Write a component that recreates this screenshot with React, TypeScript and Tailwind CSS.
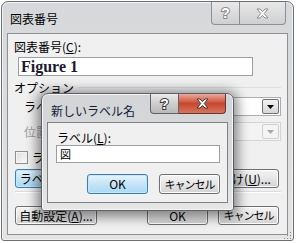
import React from "react";

const jp = "font-['Noto_Sans_CJK_JP',sans-serif]";

function CloseGlyph({ stroke = "#3a3a3a" }: { stroke?: string }) {
  return (
    <svg width="13" height="11" viewBox="-1 -1 13 11">
      <path
        d="M0 0H3L5.5 2.6L8 0H11L7.2 4.5L11 9H8L5.5 6.4L3 9H0L3.8 4.5Z"
        fill="#ffffff"
        stroke={stroke}
        strokeWidth="1"
        strokeLinejoin="round"
      />
    </svg>
  );
}

function HelpGlyph({ stroke = "#3a3a3a" }: { stroke?: string }) {
  return (
    <span
      className="font-['Liberation_Sans',sans-serif] text-[14px] font-bold leading-none text-white [paint-order:stroke_fill]"
      style={{ WebkitTextStroke: `2px ${stroke}` }}
    >
      ?
    </span>
  );
}

function Button({
  children,
  width,
  height = "h-[19px]",
  primary = false,
}: {
  children: React.ReactNode;
  width: string;
  height?: string;
  primary?: boolean;
}) {
  return (
    <div
      className={`${width} ${height} flex items-center justify-center whitespace-nowrap rounded-[3px] border text-[12px] leading-none text-black ${
        primary
          ? "border-[#3c7fb1] bg-linear-to-b from-[#e5f4fc] via-[#c4e5f6] to-[#a8d8f3] shadow-[inset_0_0_0_1px_#c0e8fc]"
          : "border-[#707070] bg-linear-to-b from-[#f4f4f4] via-[#e6e6e6] to-[#d2d2d2] shadow-[inset_0_0_0_1px_#fcfcfc]"
      }`}
    >
      {children}
    </div>
  );
}

function Cancel() {
  return <span className="text-[11px] tracking-[-1px]">キャンセル</span>;
}

function Combo({ disabled = false }: { disabled?: boolean }) {
  return (
    <div
      className={`w-[200px] h-[19px] flex justify-end items-stretch p-[1px] border ${
        disabled ? "border-[#d5d5d5] bg-[#f4f4f4]" : "border-[#abadb3] bg-white"
      }`}
    >
      <div
        className={`w-[17px] flex items-center justify-center rounded-[2px] border ${
          disabled
            ? "border-[#d0d0d0] bg-[#f4f4f4]"
            : "border-[#707070] bg-linear-to-b from-[#f2f2f2] to-[#d6d6d6]"
        }`}
      >
        <svg width="7" height="4" viewBox="0 0 7 4">
          <path d="M0 0H7L3.5 4Z" fill={disabled ? "#a8a8a8" : "#000000"} />
        </svg>
      </div>
    </div>
  );
}

export default function App() {
  return (
    <div className={`relative w-[297px] h-[243px] overflow-hidden bg-white ${jp}`}>
      {/* Outer dialog */}
      <div className="absolute left-[1px] top-[1px] w-[293px] h-[240px] flex flex-col rounded-t-[7px] rounded-b-[3px] border border-[#6b7077] bg-linear-to-b from-[#d6d8db] via-[#dcdcdc] to-[#e4e4e4] shadow-[inset_0_0_0_1px_#f2f2f2]">
        <div className="h-[31px] flex items-start">
          <span className="pl-[8px] pt-[11px] text-[12px] leading-none text-black">図表番号</span>
          <div className="ml-auto mr-[7px] flex">
            <div className="w-[29px] h-[23px] flex items-center justify-center rounded-bl-[4px] border border-t-0 border-[#8b9097] bg-linear-to-b from-[#e8e8e8] to-[#d0d0d0]">
              <HelpGlyph stroke="#8a8a8a" />
            </div>
            <div className="w-[46px] h-[23px] flex items-center justify-center rounded-br-[4px] border border-t-0 border-l-0 border-[#8b9097] bg-linear-to-b from-[#e8e8e8] to-[#d0d0d0]">
              <CloseGlyph stroke="#8a8a8a" />
            </div>
          </div>
        </div>

        <div className="flex-1 mx-[5px] mb-[5px] border border-[#8c9095] bg-[#f0f0f0] flex flex-col pt-[6px] pl-[6px] pr-[6px] text-[12px] text-black">
          <div className="h-[13px] leading-[13px]">
            図表番号(<span className="underline">C</span>):
          </div>
          <div className="mt-[4px] ml-[4px] w-[235px] h-[19px] flex items-center pl-[2px] border border-[#9a9ea5] bg-white">
            <span className="font-['Liberation_Serif',serif] text-[16px] font-bold leading-none text-[#1b1b30]">Figure 1</span>
          </div>
          <div className="mt-[5px] h-[13px] flex items-center gap-[4px]">
            <span className="leading-[13px]">オプション</span>
            <div className="flex-1 border-t border-[#d5dfe5]" />
          </div>
          <div className="mt-[3px] h-[19px] flex items-center">
            <span className="pl-[10px] leading-none whitespace-nowrap">ラベル(L):</span>
            <div className="ml-auto">
              <Combo />
            </div>
          </div>
          <div className="mt-[6px] h-[19px] flex items-center">
            <span className="pl-[10px] leading-none text-[#a0a0a0] whitespace-nowrap">位置(P):</span>
            <div className="ml-auto">
              <Combo disabled />
            </div>
          </div>
          <div className="mt-[10px] h-[13px] flex items-center gap-[4px] pl-[1px]">
            <div className="w-[13px] h-[13px] border border-[#8e8f8f] bg-linear-to-br from-[#dcdcdc] to-[#fbfbfb] shadow-[inset_0_0_0_1px_#f4f4f4]" />
            <span className="leading-none whitespace-nowrap">ラベルを番号から除外する(N)</span>
          </div>
          <div className="mt-[5px] flex items-center justify-between pl-[1px] pr-[2px]">
            <Button width="w-[82px]" primary>
              ラベル名(<span className="underline">L</span>)...
            </Button>
            <Button width="w-[91px]">
              番号付け(<span className="underline">U</span>)...
            </Button>
          </div>
          <div className="mt-[3px] ml-[1px] border-t border-[#d5dfe5] shadow-[0_1px_0_#ffffff]" />
          <div className="mt-[14px] flex items-center pl-[1px] pr-[2px]">
            <Button width="w-[82px]">
              自動設定(<span className="underline">A</span>)...
            </Button>
            <div className="ml-auto flex gap-[10px]">
              <Button width="w-[61px]">OK</Button>
              <Button width="w-[61px]">
                <Cancel />
              </Button>
            </div>
          </div>
        </div>
      </div>

      {/* resize grip */}
      <svg className="absolute left-[283px] top-[231px]" width="9" height="9" viewBox="0 0 9 9">
        <rect x="7" y="1" width="1" height="1" fill="#8a8a8a" />
        <rect x="4" y="4" width="1" height="1" fill="#8a8a8a" />
        <rect x="7" y="4" width="1" height="1" fill="#8a8a8a" />
        <rect x="1" y="7" width="1" height="1" fill="#8a8a8a" />
        <rect x="4" y="7" width="1" height="1" fill="#8a8a8a" />
        <rect x="7" y="7" width="1" height="1" fill="#8a8a8a" />
      </svg>

      {/* Inner dialog */}
      <div className="absolute left-[41px] top-[93px] w-[193px] h-[118px] flex flex-col rounded-t-[7px] rounded-b-[3px] border border-[#5c6168] bg-linear-to-b from-[#d2d4d7] via-[#dadada] to-[#e6e6e6] shadow-[0_2px_12px_4px_rgba(0,0,0,0.45),inset_0_0_0_1px_#f4f4f4]">
        <div className="h-[28px] flex items-start">
          <span className="pl-[9px] pt-[11px] text-[12px] leading-none text-[#10203a]">新しいラベル名</span>
          <div className="ml-auto mr-[7px] flex">
            <div className="w-[29px] h-[20px] flex items-center justify-center rounded-bl-[4px] border border-t-0 border-[#5f646b] bg-linear-to-b from-[#eaeaea] via-[#cfcfcf] to-[#b9b9b9]">
              <HelpGlyph />
            </div>
            <div className="w-[47px] h-[20px] flex items-center justify-center rounded-br-[4px] border border-t-0 border-l-0 border-[#5f3a35] bg-linear-to-b from-[#e9a99b] via-[#c8472f] to-[#d9745c]">
              <CloseGlyph />
            </div>
          </div>
        </div>
        <div className="flex-1 mx-[5px] mb-[7px] border border-[#7d8288] bg-[#f0f0f0] flex flex-col pt-[8px] pl-[8px] text-[12px] text-black">
          <div className="h-[13px] leading-[13px] pl-[1px]">
            ラベル(<span className="underline">L</span>):
          </div>
          <div className="mt-[1px] w-[164px] h-[18px] flex items-center pl-[3px] border border-[#9a9ea5] bg-white">
            <span className="text-[11px] leading-none">図</span>
          </div>
          <div className="mt-[11px] w-[164px] flex justify-end gap-[11px]">
            <Button width="w-[61px]" height="h-[20px]" primary>
              OK
            </Button>
            <Button width="w-[61px]" height="h-[20px]">
              <Cancel />
            </Button>
          </div>
        </div>
      </div>
    </div>
  );
}
